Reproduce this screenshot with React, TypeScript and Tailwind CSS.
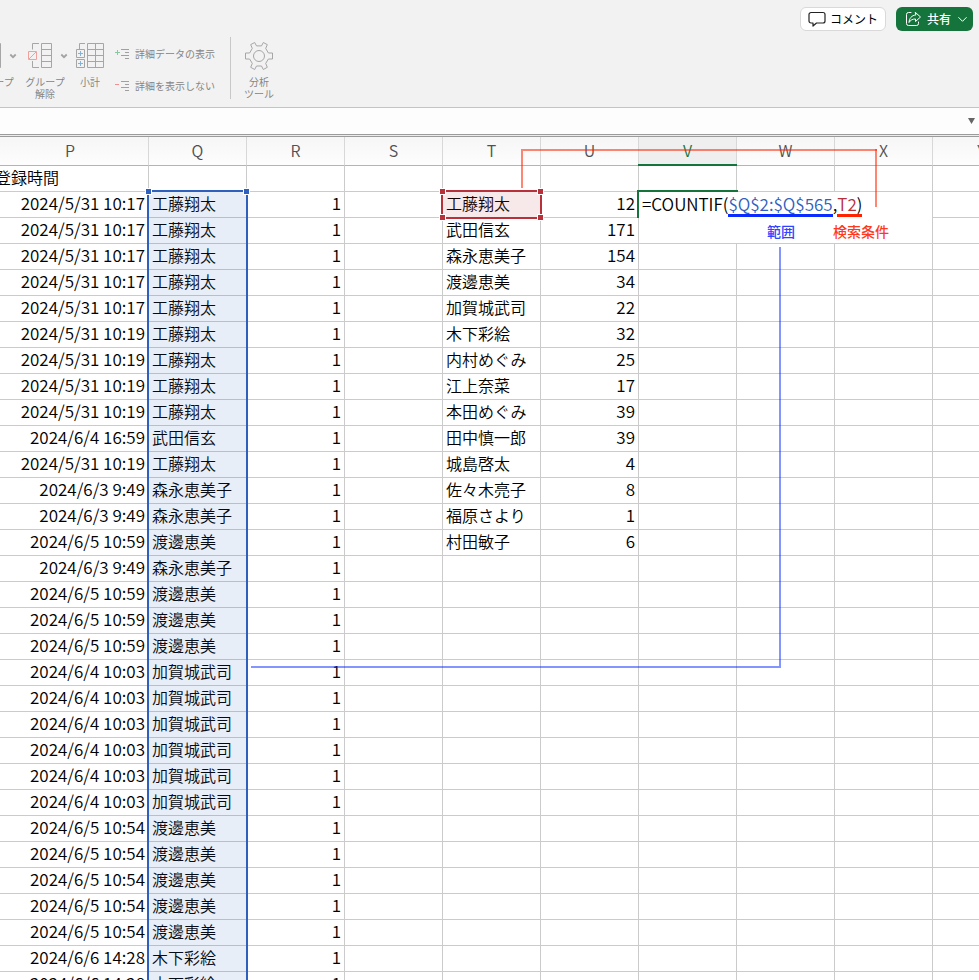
const COLUMNS = ['P', 'Q', 'R', 'S', 'T', 'U', 'V', 'W', 'X', 'Y']

const LOG: [string, string][] = [
  ['2024/5/31 10:17', '工藤翔太'],
  ['2024/5/31 10:17', '工藤翔太'],
  ['2024/5/31 10:17', '工藤翔太'],
  ['2024/5/31 10:17', '工藤翔太'],
  ['2024/5/31 10:17', '工藤翔太'],
  ['2024/5/31 10:19', '工藤翔太'],
  ['2024/5/31 10:19', '工藤翔太'],
  ['2024/5/31 10:19', '工藤翔太'],
  ['2024/5/31 10:19', '工藤翔太'],
  ['2024/6/4 16:59', '武田信玄'],
  ['2024/5/31 10:19', '工藤翔太'],
  ['2024/6/3 9:49', '森永恵美子'],
  ['2024/6/3 9:49', '森永恵美子'],
  ['2024/6/5 10:59', '渡邊恵美'],
  ['2024/6/3 9:49', '森永恵美子'],
  ['2024/6/5 10:59', '渡邊恵美'],
  ['2024/6/5 10:59', '渡邊恵美'],
  ['2024/6/5 10:59', '渡邊恵美'],
  ['2024/6/4 10:03', '加賀城武司'],
  ['2024/6/4 10:03', '加賀城武司'],
  ['2024/6/4 10:03', '加賀城武司'],
  ['2024/6/4 10:03', '加賀城武司'],
  ['2024/6/4 10:03', '加賀城武司'],
  ['2024/6/4 10:03', '加賀城武司'],
  ['2024/6/5 10:54', '渡邊恵美'],
  ['2024/6/5 10:54', '渡邊恵美'],
  ['2024/6/5 10:54', '渡邊恵美'],
  ['2024/6/5 10:54', '渡邊恵美'],
  ['2024/6/5 10:54', '渡邊恵美'],
  ['2024/6/6 14:28', '木下彩絵'],
  ['2024/6/6 14:28', '木下彩絵'],
]

const TOTALS: [string, number][] = [
  ['工藤翔太', 12],
  ['武田信玄', 171],
  ['森永恵美子', 154],
  ['渡邊恵美', 34],
  ['加賀城武司', 22],
  ['木下彩絵', 32],
  ['内村めぐみ', 25],
  ['江上奈菜', 17],
  ['本田めぐみ', 39],
  ['田中慎一郎', 39],
  ['城島啓太', 4],
  ['佐々木亮子', 8],
  ['福原さより', 1],
  ['村田敏子', 6],
]

function Chevron() {
  return (
    <svg className="h-2 w-2" viewBox="0 0 8 8" fill="none" stroke="#a3a3a3" strokeWidth="1.8">
      <path d="M1.3 2.5 4 5.2 6.7 2.5" />
    </svg>
  )
}

function GroupIcon() {
  return (
    <svg className="h-[26px] w-6" viewBox="0 0 24 26" fill="none" stroke="#a6a6a6">
      <path d="M13.5.5h10v24h-10zM13.5 6.5h10M13.5 12.5h10M13.5 18.5h10M11 .5H4.5v6M4.5 18v6.5H11" />
      <path d="M.5 8.5h8v8h-8zM1 16l7-7" stroke="#f0a09d" />
    </svg>
  )
}

function SubtotalIcon() {
  return (
    <svg className="h-[26px] w-7" viewBox="0 0 28 26" fill="none" stroke="#a6a6a6">
      <path d="M11.5.5h16v24h-16zM19.5.5v24M11.5 6.5h16M11.5 12.5h16M11.5 18.5h16M9 .5H3.5v5.500" />
      <path d="M.5 6.5h8v8h-8zM.5 16.5h8v8h-8z" />
      <path d="M2 10.5h5M4.5 8v5M2 20.5h5M4.5 18v5" stroke="#7fb2dc" />
    </svg>
  )
}

function DetailIcon({ plus }: { plus?: boolean }) {
  return (
    <svg className="h-3 w-[14px]" viewBox="0 0 14 12" fill="none" stroke="#a0a0a0">
      <path d="M6 1.5h8M10 4.5h4M6 7.5h8M10 10.5h4" />
      {plus ? <path d="M0 4.5h5M2.5 2v5" stroke="#84cba0" /> : <path d="M0 4.5h4" stroke="#ee9090" />}
    </svg>
  )
}

function GearIcon() {
  return (
    <svg className="h-7 w-7" viewBox="0 0 28 28" fill="none" stroke="#a6a6a6" strokeLinejoin="round">
      <path d="M5.7 2.6 9.7.5l1.8 3.4h5L18.3.5l4 2.1-1.6 3.8 2.7 4.6h4.1v6h-4.1l-2.7 4.4 1.6 3.9-4 2.2-1.800-3.500h-5l-1.800 3.500-4-2.200 1.600-3.900L4.600 17H.5v-6h4.100l2.700-4.600z" />
      <circle cx="14" cy="14" r="5.5" />
    </svg>
  )
}

function Ribbon() {
  return (
    <header className="h-[108px] shrink-0 overflow-hidden border-b border-[#c4c4c4] bg-[#f2f2f2]">
      <div className="flex h-[37px] justify-end gap-[10px] pt-[7px] pr-[6px] text-xs">
        <button className="flex h-6 items-center gap-1 rounded-md border border-[#d9d9d9] bg-white px-[7px] text-black">
          <svg className="h-4 w-[18px]" viewBox="0 0 18 16" fill="none" stroke="#222" strokeWidth="1.2" strokeLinejoin="round">
            <path d="M3 1.5h12a2 2 0 0 1 2 2v6.500a2 2 0 0 1-2 2H8.500L5 15v-3H3a2 2 0 0 1-2-2V3.500a2 2 0 0 1 2-2z" />
          </svg>
          コメント
        </button>
        <button className="flex h-6 items-center rounded-md bg-[#15743b] pr-[6px] pl-[9px] font-medium text-white">
          <svg className="mr-[6px] h-4 w-4" viewBox="0 0 16 16" fill="none" stroke="#fff" strokeLinecap="round" strokeLinejoin="round">
            <path d="M6 1.5H3.5a2 2 0 0 0-2 2v9a2 2 0 0 0 2 2h8a2 2 0 0 0 2-2V11" />
            <path d="M10.5 1.500 15.500 6l-5 4.500V8C7.500 8 5.500 9 4 11.500 4.300 7.500 6.500 4.300 10.500 4z" />
          </svg>
          共有
          <svg className="ml-[7px] h-[9px] w-[9px]" viewBox="0 0 9 9" fill="none" stroke="#fff" strokeLinecap="round">
            <path d="M.7 2.5 4.5 6.3 8.3 2.5" />
          </svg>
        </button>
      </div>
      <div className="-ml-[31px] flex text-[10px] leading-3 text-[#858585]">
        {['グループ', 'グループ解除'].map((label) => (
          <button key={label} className="mr-px flex w-[50px] flex-col items-center pt-[6px]">
            <span className="flex items-center gap-2 pl-[6px]">
              <GroupIcon />
              <Chevron />
            </span>
            <span className="mt-[7px] w-10">{label}</span>
          </button>
        ))}
        <button className="ml-[5px] flex w-7 flex-col items-center pt-[6px]">
          <SubtotalIcon />
          <span className="mt-[7px]">小計</span>
        </button>
        <div className="ml-[11px] flex flex-col gap-5 pt-[11px]">
          <button className="flex items-center gap-[6px]"><DetailIcon plus />詳細データの表示</button>
          <button className="flex items-center gap-[6px]"><DetailIcon />詳細を表示しない</button>
        </div>
        <div className="ml-[15px] h-[62px] w-px bg-[#c8c8c8]" />
        <button className="ml-[13px] flex w-[30px] flex-col items-center pt-[5px]">
          <GearIcon />
          <span className="mt-[6px]">分析<br />ツール</span>
        </button>
      </div>
    </header>
  )
}

function Sheet() {
  return (
    <table className="w-max table-fixed border-separate border-spacing-0 text-base leading-[23px] font-[350] text-black">
      <colgroup>
        <col className="w-[157px]" />
        {COLUMNS.slice(1).map((c) => <col key={c} className="w-[98px]" />)}
      </colgroup>
      <thead>
        <tr className="h-[29px]">
          {COLUMNS.map((c) => (
            <th
              key={c}
              className={
                c === 'V'
                  ? 'border-r border-b border-r-[#d8d8d8] border-b-[#15743b] bg-[#efefef] p-0 pb-[2px] font-[350] text-[#15743b]'
                  : 'border-r border-b border-r-[#d8d8d8] border-b-[#b4b4b4] bg-linear-to-b from-[#f6f6f6] to-[#fdfdfd] p-0 pb-[2px] font-[350] text-[#505050]'
              }
            >
              {c}
            </th>
          ))}
        </tr>
      </thead>
      <tbody className="[&_td]:h-[26px] [&_td]:border-r [&_td]:border-b [&_td]:border-[#cbcbcb] [&_td]:px-[3px] [&_td]:pt-0 [&_td]:pb-[2px] [&_td]:whitespace-nowrap [&_td.text-right]:pb-1 [&_td.text-right]:text-[17px] [&_td.text-right]:leading-[21px]">
        <tr>
          <td>登録時間</td>
          {COLUMNS.slice(1).map((c) => <td key={c} />)}
        </tr>
        {LOG.map(([time, name], i) => (
          <tr key={i}>
            <td className="text-right">{time}</td>
            <td>{name}</td>
            <td className="text-right">1</td>
            <td />
            <td>{TOTALS[i]?.[0]}</td>
            <td className="text-right">{TOTALS[i]?.[1]}</td>
            <td />
            <td />
            <td />
            <td />
          </tr>
        ))}
      </tbody>
    </table>
  )
}

// Range frames, the cell editor and the callouts that float over the grid
function Overlays() {
  return (
    <>
      <div className="absolute top-[53px] bottom-[-8px] left-[155px] w-[101px] border-2 border-[#2f60bd] bg-[#2f60bd]/11">
        <i className="absolute -top-[3px] -left-[3px] size-[5px] bg-[#2f60bd] outline outline-white" />
        <i className="absolute -top-[3px] -right-[3px] size-[5px] bg-[#2f60bd] outline outline-white" />
      </div>

      <div className="absolute top-[53px] left-[449px] h-[29px] w-[101px] border-2 border-[#b8303a] bg-[#b8303a]/11">
        <i className="absolute -top-[3px] -left-[3px] size-[5px] bg-[#b8303a] outline outline-white" />
        <i className="absolute -top-[3px] -right-[3px] size-[5px] bg-[#b8303a] outline outline-white" />
        <i className="absolute -bottom-[3px] -left-[3px] size-[5px] bg-[#b8303a] outline outline-white" />
        <i className="absolute -right-[3px] -bottom-[3px] size-[5px] bg-[#b8303a] outline outline-white" />
      </div>

      <div className="absolute top-[27px] left-[646px] h-[2px] w-[99px] bg-[#15743b]" />
      <div className="absolute top-[55px] left-[647px] h-[51px] w-[293px] bg-white pl-[3px]">
        <div className="flex text-[17px] leading-[24px] font-[350] whitespace-nowrap text-black">
          =COUNTIF(
          <span className="h-[25px] border-b-3 border-[#0b2cff] text-[#2f60bd]">$Q$2:$Q$565</span>
          ,
          <span className="h-[25px] border-b-3 border-[#ff2300] text-[#b8303a]">T2<span className="text-black">)</span></span>
        </div>
        <div className="flex gap-[38px] pl-[125px] text-sm leading-7 font-medium">
          <span className="text-[#2f45ff]">範囲</span>
          <span className="text-[#ff3a1c]">検索条件</span>
        </div>
      </div>
      <div className="absolute top-[53px] left-[645px] h-[28px] w-[101px] border-t-2 border-l-2 border-[#15743b]" />

      <div className="absolute top-[12px] left-[529px] h-[39px] w-[356px] border-t-2 border-l-2 border-[#ff2300]/55" />
      <div className="absolute top-[12px] left-[883px] h-[58px] w-[2px] bg-[#ff2300]/55" />
      <div className="absolute top-[110px] left-[787px] h-[419px] w-[2px] bg-[#0b2cff]/50" />
      <div className="absolute top-[529px] left-[259px] h-[2px] w-[530px] bg-[#0b2cff]/50" />
    </>
  )
}

export default function App() {
  return (
    <div className="flex h-screen flex-col overflow-hidden bg-white font-['Noto_Sans_CJK_JP',sans-serif]">
      <Ribbon />
      <div className="flex h-[26px] shrink-0 items-center bg-[#fdfdfd]">
        <input aria-label="数式バー" className="h-full flex-1 bg-transparent px-2 text-sm outline-none" />
        <button aria-label="数式バーを展開" className="px-1">
          <svg className="h-[6px] w-[7px]" viewBox="0 0 7 6" fill="#666">
            <path d="M0 0h7L3.5 6z" />
          </svg>
        </button>
      </div>
      <div className="h-[3px] shrink-0 border-y border-[#9b9b9b] bg-[#ececec]" />
      <main className="min-h-0 flex-1 overflow-hidden">
        <div className="relative -ml-2 w-max">
          <Sheet />
          <Overlays />
        </div>
      </main>
    </div>
  )
}
